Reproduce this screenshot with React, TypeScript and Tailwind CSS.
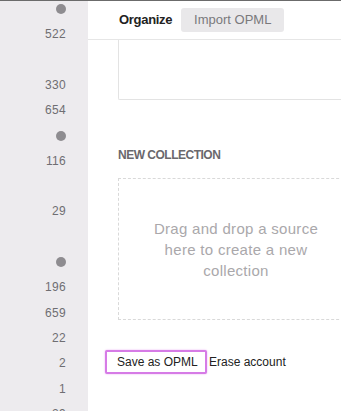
import React from 'react';

type Row = { kind: 'dot' } | { kind: 'num'; value: string } | { kind: 'empty' };

const rows: Row[] = [
  { kind: 'dot' },
  { kind: 'num', value: '522' },
  { kind: 'empty' },
  { kind: 'num', value: '330' },
  { kind: 'num', value: '654' },
  { kind: 'dot' },
  { kind: 'num', value: '116' },
  { kind: 'empty' },
  { kind: 'num', value: '29' },
  { kind: 'empty' },
  { kind: 'dot' },
  { kind: 'num', value: '196' },
  { kind: 'num', value: '659' },
  { kind: 'num', value: '22' },
  { kind: 'num', value: '2' },
  { kind: 'num', value: '1' },
  { kind: 'num', value: '29' },
];

const Sidebar: React.FC = () => (
  <div className="w-[88px] shrink-0 bg-[#edebee] overflow-hidden">
    <div className="-mt-[4.6px] flex flex-col">
      {rows.map((r, i) => (
        <div key={i} className="h-[25.3px] flex items-center justify-end pr-[22px]">
          {r.kind === 'dot' && <div className="w-[10px] h-[10px] rounded-full bg-[#8e8c90]" />}
          {r.kind === 'num' && <span className="text-[12px] text-[#6f6e72] tracking-[0.3px]">{r.value}</span>}
        </div>
      ))}
    </div>
  </div>
);

export default function App() {
  return (
    <div
      className="w-[341px] h-[411px] overflow-hidden flex flex-col bg-white border-t border-[#6b6b6b]"
      style={{ fontFamily: '"Liberation Sans", Arial, sans-serif' }}
    >
      <div className="flex flex-1 min-h-0">
        <Sidebar />
        <div className="flex-1 min-w-0 overflow-hidden">
          <div className="h-[39px] border-b border-[#e6e6e6] flex items-center pl-[31px] gap-[9px]">
            <span className="text-[13px] font-bold text-[#222] tracking-[-0.3px]">Organize</span>
            <button className="h-[24px] w-[103px] rounded-[3px] bg-[#e9e8ea] text-[13px] text-[#7a797c]">
              Import OPML
            </button>
          </div>
          <div className="pl-[30px]">
            <div className="w-[280px] h-[60px] border-l border-b border-[#e3e3e3] rounded-bl-[2px]" />
            <div className="mt-[46px] text-[12px] font-bold text-[#6a686c] tracking-[-0.5px]">NEW COLLECTION</div>
            <div className="mt-[14px] w-[236px] h-[142px] border border-dashed border-[#d9d9d9] flex items-center justify-center">
              <p className="text-[15px] leading-[21px] text-[#aaa8ab] text-center tracking-[0.3px] px-[20px]">
                Drag and drop a source here to create a new collection
              </p>
            </div>
          </div>
          <div className="mt-[30px] pl-[17px] flex items-center gap-[2px]">
            <button className="h-[24px] w-[102px] border-2 border-[#d67be6] rounded-[2px] shadow-[0_0_2px_#e9a6f2] bg-white text-[12px] text-[#222] pl-[10px] text-left">
              Save as OPML
            </button>
            <span className="text-[12px] text-[#222]">Erase account</span>
          </div>
        </div>
      </div>
    </div>
  );
}
